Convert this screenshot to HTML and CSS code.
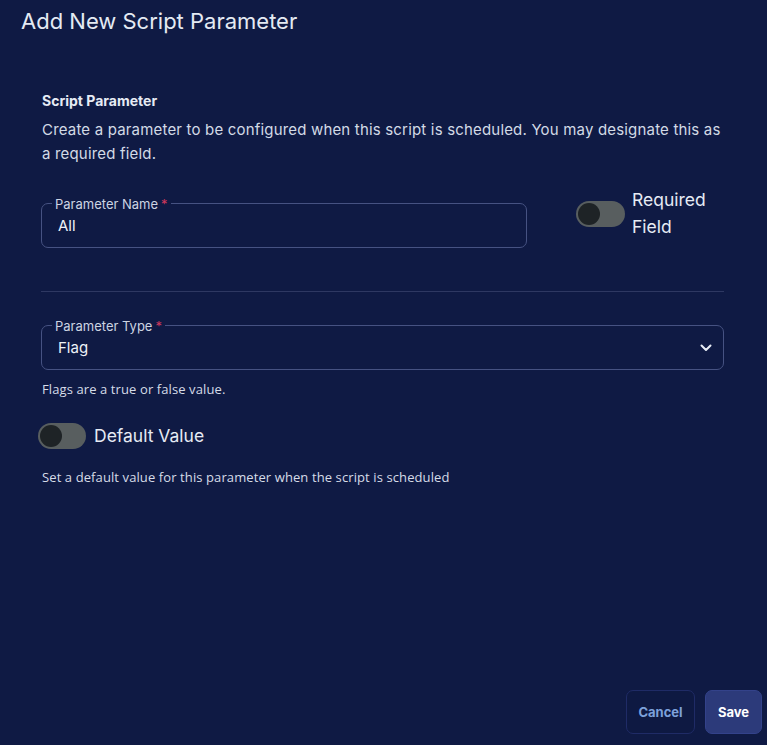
FILE: index.html
```html
<!DOCTYPE html>
<html lang="en">
<head>
  <meta charset="UTF-8">
  <title>Add New Script Parameter</title>
  <link rel="stylesheet" href="styles.css">
</head>
<body>
  <div class="dialog">
    <h1 class="dialog-title">Add New Script Parameter</h1>

    <div class="dialog-body">
      <h2>Script Parameter</h2>
      <p class="intro">Create a parameter to be configured when this script is scheduled. You may designate this as a required field.</p>

      <div class="name-row">
        <div class="field name-field">
          <span class="field-label">Parameter Name<span class="req">*</span></span>
          <span class="field-value">All</span>
        </div>
        <label class="toggle required-toggle">
          <span class="track"><span class="knob"></span></span>
          <span class="toggle-text">Required<br>Field</span>
        </label>
      </div>

      <hr class="divider">

      <div class="field select-field">
        <span class="field-label">Parameter Type<span class="req">*</span></span>
        <span class="field-value">Flag</span>
        <svg class="chevron" width="12" height="8" viewBox="0 0 12 8">
          <path d="M1.5 1.5 L6 6 L10.5 1.5" fill="none" stroke="#e8edf6" stroke-width="2" stroke-linecap="round" stroke-linejoin="round"/>
        </svg>
      </div>
      <div class="helper">Flags are a true or false value.</div>

      <label class="toggle default-toggle">
        <span class="track"><span class="knob"></span></span>
        <span class="toggle-text">Default Value</span>
      </label>
      <div class="helper helper-2">Set a default value for this parameter when the script is scheduled</div>
    </div>

    <div class="dialog-actions">
      <button class="btn btn-cancel">Cancel</button>
      <button class="btn btn-save">Save</button>
    </div>
  </div>
</body>
</html>
```

FILE: styles.css
```css
body {
  margin: 0;
  background: #0f1a44;
  font-family: 'Inter', 'Liberation Sans', sans-serif;
  color: #d3dae6;
}
.dialog {
  min-height: 745px;
  display: flex;
  flex-direction: column;
}
.dialog-title {
  margin: 0;
  padding: 8px 21px 0;
  font-size: 22px;
  line-height: 26px;
  font-weight: 400;
  color: #e4eaf3;
}
.dialog-body {
  padding: 0 43px 0 41px;
  margin-top: 57px;
}
.dialog-body h2 {
  margin: 0;
  padding-left: 1px;
  font-size: 14px;
  line-height: 20px;
  font-weight: 700;
  color: #e6ebf4;
}
.intro {
  margin: 7px 0 0;
  padding-left: 1px;
  font-size: 15px;
  line-height: 24px;
  letter-spacing: 0.18px;
  color: #d3dae6;
}
/* Outlined fields */
.field {
  position: relative;
  box-sizing: border-box;
  height: 45px;
  border: 1px solid #465282;
  border-radius: 7px;
  display: flex;
  align-items: center;
  padding: 0 16px;
}
.field-label {
  position: absolute;
  top: -8px;
  left: 10px;
  padding: 0 3px;
  background: #0f1a44;
  font-size: 13px;
  line-height: 17px;
  color: #cdd4e2;
}
.field-label .req {
  color: #d0385c;
  margin-left: 3px;
}
.field-value {
  font-size: 15px;
  color: #eef2f8;
  padding-top: 1px;
  padding-bottom: 1px;
}
.name-row {
  display: flex;
  align-items: flex-start;
  margin-top: 37px;
}
.name-field {
  width: 486px;
}
.required-toggle {
  margin-left: 49px;
  margin-top: -18px;
}
.divider {
  margin: 43px 0 0;
  border: none;
  border-top: 1px solid #2e3862;
}
.select-field {
  margin-top: 33px;
}
.chevron {
  margin-left: auto;
  margin-right: -5px;
}
.helper {
  margin-top: 10px;
  padding-left: 1px;
  font-family: 'Open Sans', 'Liberation Sans', sans-serif;
  font-size: 13px;
  line-height: 18px;
  letter-spacing: 0.1px;
  color: #d6dce8;
}
.helper-2 {
  margin-top: 19px;
}
/* Toggle switches */
.toggle {
  display: flex;
  align-items: center;
  gap: 7px;
}
.track {
  width: 49px;
  height: 26px;
  border-radius: 13px;
  background: #585e5f;
  display: flex;
  align-items: center;
  padding-left: 2px;
  box-sizing: border-box;
}
.knob {
  width: 22px;
  height: 22px;
  border-radius: 50%;
  background: #1e2326;
}
.toggle-text {
  font-size: 17.5px;
  line-height: 27px;
  color: #e6ebf4;
}
.required-toggle .toggle-text {
  margin-top: 1px;
}
.required-toggle .track {
  margin-top: 2px;
}
.default-toggle {
  margin-top: 25px;
  margin-left: -3px;
  gap: 8px;
}
.default-toggle .toggle-text {
  margin-top: -1px;
}
.default-toggle .track {
  width: 48px;
}
/* Actions */
.dialog-actions {
  margin-top: auto;
  display: flex;
  justify-content: flex-end;
  gap: 10px;
  padding: 0 5px 11px;
}
.btn {
  height: 44px;
  border-radius: 7px;
  font-family: 'Inter', 'Liberation Sans', sans-serif;
  font-size: 13px;
  font-weight: 700;
  cursor: pointer;
}
.btn-cancel {
  width: 69px;
  background: #0e1942;
  border: 1px solid #1f2b66;
  color: #7da1db;
}
.btn-save {
  width: 57px;
  background: #2c3a7a;
  border: 1px solid #33428a;
  color: #ffffff;
}
```
